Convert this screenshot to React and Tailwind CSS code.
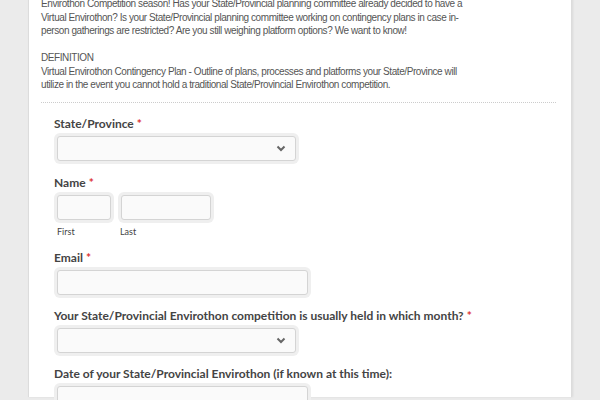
import React from "react";

const intro = [
  "Envirothon Competition season! Has your State/Provincial planning committee already decided to have a",
  "Virtual Envirothon? Is your State/Provincial planning committee working on contingency plans in case in-",
  "person gatherings are restricted? Are you still weighing platform options? We want to know!",
];

const definition = [
  "DEFINITION",
  "Virtual Envirothon Contingency Plan - Outline of plans, processes and platforms your State/Province will",
  "utilize in the event you cannot hold a traditional State/Provincial Envirothon competition.",
];

const Chevron = () => (
  <svg width="10" height="7" viewBox="0 0 10 7" className="text-[#666]">
    <path d="M1.5 1.5 L5 5 L8.5 1.5" fill="none" stroke="currentColor" strokeWidth="2" />
  </svg>
);

const Label = ({ children, required }) => (
  <div className="text-[12px] leading-[16px] font-bold text-[#444] [font-family:Lato,sans-serif]">
    {children}
    {required && <span className="text-[#d33] ml-[3px]">*</span>}
  </div>
);

const Box = ({ width, select }) => (
  <div className="p-[3px] rounded-[6px] bg-[#efefef] flex w-fit">
    <div
      className={`h-[25px] rounded-[3px] border border-[#d4d4d4] bg-[#fafafa] flex items-center justify-end pr-[9px] ${width}`}
    >
      {select && <Chevron />}
    </div>
  </div>
);

export default function App() {
  return (
    <div className="w-[600px] h-[400px] overflow-hidden bg-[#ebebeb]">
      <div className="ml-[28px] w-[544px] h-full bg-white border-x border-[#dcdcdc] shadow-[1px_0_2px_rgba(0,0,0,0.08)] px-[12px]">
        <div className="-mt-[3px] text-[10px] leading-[13.5px] text-[#555] [font-family:'Liberation_Sans',sans-serif] tracking-[-0.42px]">
          {intro.map((l) => (
            <div key={l} className="whitespace-nowrap">{l}</div>
          ))}
          <div className="h-[13.5px]" />
          {definition.map((l) => (
            <div key={l} className="whitespace-nowrap">{l}</div>
          ))}
        </div>
        <div className="mt-[10px] w-[515px] border-t border-dotted border-[#ccc]" />

        <div className="pl-[13px] pt-[13px]">
          <Label required>State/Province</Label>
          <div className="mt-[1px]">
            <Box width="w-[239px]" select />
          </div>

          <div className="mt-[11px]">
            <Label required>Name</Label>
          </div>
          <div className="mt-[1px] flex gap-[4px]">
            <div>
              <Box width="w-[54px]" />
              <div className="mt-[4px] ml-[3px] text-[9px] leading-[10px] text-[#444] [font-family:Lato,sans-serif]">First</div>
            </div>
            <div>
              <Box width="w-[90px]" />
              <div className="mt-[4px] ml-[2px] text-[9px] leading-[10px] text-[#444] [font-family:Lato,sans-serif]">Last</div>
            </div>
          </div>

          <div className="mt-[13px]">
            <Label required>Email</Label>
          </div>
          <div className="mt-[1px]">
            <Box width="w-[251px]" />
          </div>

          <div className="mt-[10px]">
            <Label required>Your State/Provincial Envirothon competition is usually held in which month?</Label>
          </div>
          <div className="mt-[1px]">
            <Box width="w-[239px]" select />
          </div>

          <div className="mt-[10px]">
            <Label>Date of your State/Provincial Envirothon (if known at this time):</Label>
          </div>
          <div className="mt-[1px]">
            <Box width="w-[251px]" />
          </div>
        </div>
      </div>
    </div>
  );
}
